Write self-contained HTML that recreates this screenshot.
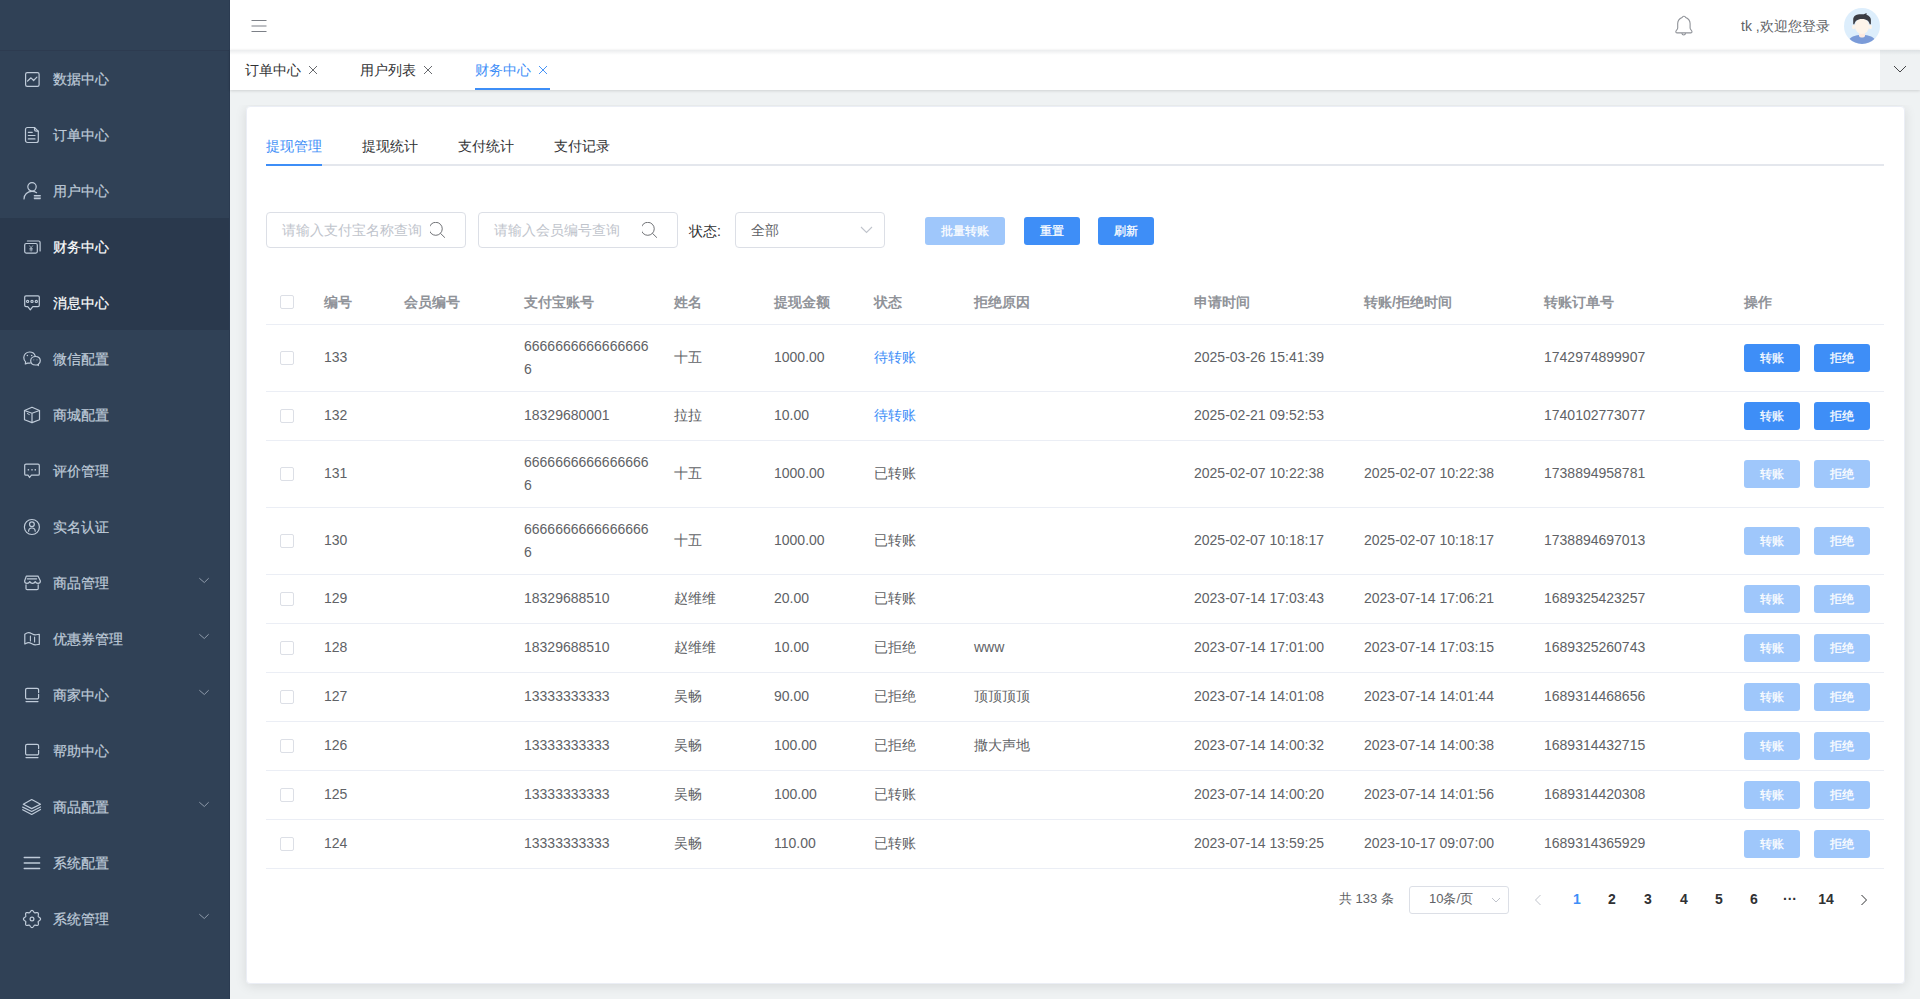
<!DOCTYPE html><html><head><meta charset="utf-8"><style>
*{box-sizing:border-box;margin:0;padding:0}
html,body{width:1920px;height:999px;overflow:hidden;background:#eff2f3;font-family:"Liberation Sans",sans-serif;font-size:14px;color:#606266}
.a{position:absolute}
#side{position:absolute;left:0;top:0;width:230px;height:999px;background:#304156;border-right:1px solid #2b3b51}
#side .logo{position:absolute;left:0;top:0;width:229px;height:51px;border-bottom:1px solid #2d3b50}
.mi{position:absolute;left:0;width:229px;height:56px;color:#bfcbd9;font-size:14px}
.mi.dark{background:#2a394d;color:#fff}
.mi svg.ic{position:absolute;left:20px;top:14px;width:30px;height:30px;fill:none;stroke:#bfcbd9;stroke-width:1.2;stroke-linejoin:round;stroke-linecap:round}
.mi .tx{position:absolute;left:53px;top:1px;line-height:56px;white-space:nowrap;-webkit-text-stroke:.2px currentColor}
.mi svg.ar{position:absolute;left:198px;top:23px;width:12px;height:7px;fill:none;stroke:#8f9bab;stroke-width:1}
#hdr{position:absolute;left:230px;top:0;width:1690px;height:50px;background:#fff}
#tabs{position:absolute;left:230px;top:50px;width:1690px;height:40px;background:#fff;box-shadow:0 1px 3px 0 rgba(0,0,0,.12),0 0 3px 0 rgba(0,0,0,.04)}
#hsh{position:absolute;left:230px;top:50px;width:1690px;height:5px;background:linear-gradient(rgba(0,21,41,.08),rgba(0,21,41,0))}
.tab{position:absolute;top:0;height:40px;line-height:41px;color:#303133;font-size:14px;white-space:nowrap}
.tab.act{color:#3e8ef7}
.tab .x{display:inline-block;margin-left:7px;vertical-align:middle}
.tab.act:after{content:"";position:absolute;left:0;right:0;bottom:0;height:2px;background:#3e8ef7}
#tabr{position:absolute;left:1880px;top:50px;width:40px;height:40px;background:#eff2f3}
#clip{position:absolute;left:231px;top:105px;width:1689px;height:894px;overflow:hidden}
#card{position:absolute;left:246px;top:106px;width:1659px;height:878px;background:#fff;border-radius:4px;border:1px solid #ebeef5}
#csh{position:absolute;left:15px;top:1px;width:1659px;height:878px;border-radius:4px;box-shadow:0 2px 12px 0 rgba(0,0,0,.1)}
.itab{position:absolute;top:0;height:40px;line-height:40px;font-size:14px;color:#303133;white-space:nowrap}
.itab.act{color:#3e8ef7}
.inp{position:absolute;top:212px;height:36px;border:1px solid #dcdfe6;border-radius:4px;background:#fff}
.ph{position:absolute;left:15px;top:0;line-height:34px;color:#c0c4cc;white-space:nowrap}
.btn{position:absolute;height:28px;line-height:28px;border-radius:3px;background:#3e8ef7;color:#fff;font-size:12px;text-align:center;white-space:nowrap;-webkit-text-stroke:.25px #fff}
.btn.dis{background:#9fc7fb}
.th,.td{position:absolute;white-space:nowrap}
.th{color:#909399;font-weight:bold;font-size:14px;line-height:23px}
.td{color:#606266;font-size:14px;line-height:23px}
.hl{position:absolute;left:266px;width:1618px;height:1px;background:#ebeef5}
.cb{position:absolute;left:280px;width:14px;height:14px;border:1px solid #dcdfe6;border-radius:2px;background:#fff}
.pg{position:absolute;top:885px;height:28px;line-height:28px;font-size:14px;color:#303133;font-weight:bold;text-align:center;white-space:nowrap}
</style></head><body>
<div id="side"><div class="logo"></div>
<div class="mi" style="top:50px"><svg class="ic" viewBox="0 0 30 30"><rect x="5.6" y="8.6" width="13.5" height="13.8" rx="1.6"/><path d="M7.6 17l3.4-3.2 2.6 2.7 3.3-3.3"/></svg><span class="tx">数据中心</span></div>
<div class="mi" style="top:106px"><svg class="ic" viewBox="0 0 30 30"><path d="M7.5 7.5h7l3.8 3.8v9.2a2 2 0 0 1-2 2H7.5a2 2 0 0 1-2-2v-11a2 2 0 0 1 2-2z"/><path d="M14.5 7.5v2a1.6 1.6 0 0 0 1.6 1.6h2.2"/><path d="M8.3 12.3h4M8.3 15.5h6.7M8.3 18.9h6.7"/></svg><span class="tx">订单中心</span></div>
<div class="mi" style="top:162px"><svg class="ic" viewBox="0 0 30 30"><circle cx="12" cy="10.8" r="4.2"/><path d="M4 23c0-4.5 3.5-7.6 8-7.6 1.8 0 3.3.4 4.6 1.3"/><path d="M14.3 19.5h6M14.3 21h6M14.3 22.6h6"/></svg><span class="tx">用户中心</span></div>
<div class="mi dark" style="top:218px"><svg class="ic" viewBox="0 0 30 30"><rect x="4.7" y="11.5" width="12.6" height="9.6" rx="1.5"/><path d="M7.4 9h11.3a1.4 1.4 0 0 1 1.4 1.4V19"/><path d="M9.6 13.8l1.5 2 1.5-2M11.1 15.8v3.4M9.8 16.6h2.6M9.8 17.9h2.6" stroke-width=".7"/></svg><span class="tx">财务中心</span></div>
<div class="mi dark" style="top:274px"><svg class="ic" viewBox="0 0 30 30"><path d="M6 7.8h12a1.3 1.3 0 0 1 1.3 1.3v8.2a1.3 1.3 0 0 1-1.3 1.3h-5.2l-2.5 3.2-2.5-3.2H6a1.3 1.3 0 0 1-1.3-1.3V9.1A1.3 1.3 0 0 1 6 7.8z"/><circle cx="7.6" cy="13.4" r="1.1"/><circle cx="12" cy="13.4" r="1.1"/><circle cx="16.3" cy="13.4" r="1.1"/></svg><span class="tx">消息中心</span></div>
<div class="mi" style="top:330px"><svg class="ic" viewBox="0 0 30 30"><path d="M10.3 19c-.9.2-1.8.3-2.7.1L5.3 20l.3-2.1C4.3 16.8 3.8 15.4 3.8 13.6 3.8 10.4 6.4 8 9.6 8c2.7 0 5 1.7 5.6 4"/><circle cx="7.4" cy="11.6" r=".75" fill="#bfcbd9" stroke="none"/><circle cx="11.7" cy="11.6" r=".75" fill="#bfcbd9" stroke="none"/><path d="M18.4 21.5l.1-1.6c1.2-.8 1.8-2 1.8-3.2 0-2.6-2.2-4.2-4.8-4.2s-4.8 1.7-4.8 4.3 2.2 4.2 4.8 4.2c.6 0 1.4-.1 1.9-.3z"/><circle cx="13.8" cy="15.8" r=".6" fill="#8d9aab" stroke="none"/><circle cx="17" cy="15.8" r=".6" fill="#8d9aab" stroke="none"/></svg><span class="tx">微信配置</span></div>
<div class="mi" style="top:386px"><svg class="ic" viewBox="0 0 30 30"><path d="M12 7.2l7.5 3.3v9.3L12 22.6l-7.5-2.8v-9.3z"/><path d="M4.5 10.5L12 13.3l7.5-2.8M12 13.3v9.3"/><path d="M7.3 13.5l2 1" stroke-width="1"/></svg><span class="tx">商城配置</span></div>
<div class="mi" style="top:442px"><svg class="ic" viewBox="0 0 30 30"><path d="M6 8.1h12a1.3 1.3 0 0 1 1.3 1.3v8.5a1.3 1.3 0 0 1-1.3 1.3h-6.6l-1.8 2.3-1.6-2.3H6a1.3 1.3 0 0 1-1.3-1.3V9.4A1.3 1.3 0 0 1 6 8.1z"/><rect x="7.7" y="13.1" width="1.4" height="1.4" fill="#bfcbd9" stroke="none"/><rect x="11.3" y="13.1" width="1.4" height="1.4" fill="#bfcbd9" stroke="none"/><rect x="14.6" y="13.1" width="1.4" height="1.4" fill="#bfcbd9" stroke="none"/></svg><span class="tx">评价管理</span></div>
<div class="mi" style="top:498px"><svg class="ic" viewBox="0 0 30 30"><circle cx="11.9" cy="15" r="7.5"/><circle cx="11.9" cy="12.3" r="2.4"/><path d="M8.6 19.2c0-1.8 1.4-3.2 3.3-3.2s3.3 1.4 3.3 3.2"/></svg><span class="tx">实名认证</span></div>
<div class="mi" style="top:554px"><svg class="ic" viewBox="0 0 30 30"><path d="M6.3 8.1h11.7l2.4 4.9c0 1.3-1 2.3-2.4 2.3-1.4 0-2.5-1-2.8-1.8-.3.8-1.4 1.8-2.7 1.8s-2.4-1-2.7-1.8c-.3.8-1.4 1.8-2.8 1.8-1.4 0-2.4-1-2.4-2.3z"/><path d="M7.3 10.8h9.3" stroke-width="1.3"/><path d="M6 16.8v3.6a1.2 1.2 0 0 0 1.2 1.2h9.8a1.2 1.2 0 0 0 1.2-1.2v-3.6"/></svg><span class="tx">商品管理</span><svg class="ar" viewBox="0 0 12 7"><path d="M1.3 1.2l5 4.3 4.4-4.3"/></svg></div>
<div class="mi" style="top:610px"><svg class="ic" viewBox="0 0 30 30"><path d="M4.8 10.2c1.3-.9 2.6-1.6 3.8-1.6 2.4 0 4.2 2.2 6.6 2.2 1.4 0 2.8-.4 4.1-.5v10c-1.3.2-2.7.6-4.1.6-2.4 0-4.2-2.2-6.6-2.2-1.2 0-2.5.7-3.8 1.3z"/><path d="M10.4 12v5M14.6 13v5" stroke-width="1.1"/></svg><span class="tx">优惠券管理</span><svg class="ar" viewBox="0 0 12 7"><path d="M1.3 1.2l5 4.3 4.4-4.3"/></svg></div>
<div class="mi" style="top:666px"><svg class="ic" viewBox="0 0 30 30"><path d="M18.6 12.5v-2.7a1.5 1.5 0 0 0-1.5-1.5H7.1a1.5 1.5 0 0 0-1.5 1.5v7.6a1.5 1.5 0 0 0 1.5 1.5h10a1.5 1.5 0 0 0 1.5-1.5v-3.1"/><path d="M6 21.6h12"/></svg><span class="tx">商家中心</span><svg class="ar" viewBox="0 0 12 7"><path d="M1.3 1.2l5 4.3 4.4-4.3"/></svg></div>
<div class="mi" style="top:722px"><svg class="ic" viewBox="0 0 30 30"><path d="M18.6 12.5v-2.7a1.5 1.5 0 0 0-1.5-1.5H7.1a1.5 1.5 0 0 0-1.5 1.5v7.6a1.5 1.5 0 0 0 1.5 1.5h10a1.5 1.5 0 0 0 1.5-1.5v-3.1"/><path d="M6 21.6h12"/></svg><span class="tx">帮助中心</span></div>
<div class="mi" style="top:778px"><svg class="ic" viewBox="0 0 30 30"><path d="M11.7 7.5l8.8 4.7-8.8 4.4-8.4-4.4z"/><path d="M2.7 15.1l9 4.4 8.8-4.5M2.7 17.7l9 4.8 8.8-5"/></svg><span class="tx">商品配置</span><svg class="ar" viewBox="0 0 12 7"><path d="M1.3 1.2l5 4.3 4.4-4.3"/></svg></div>
<div class="mi" style="top:834px"><svg class="ic" viewBox="0 0 30 30"><path d="M4.2 9.5h15.5M4.2 15h15.5M4.2 20.5h15.5" stroke-width="1.3"/></svg><span class="tx">系统配置</span></div>
<div class="mi" style="top:890px"><svg class="ic" viewBox="0 0 30 30"><path d="M12.00 6.45 L12.33 6.50 L12.66 6.65 L12.96 6.88 L13.24 7.17 L13.49 7.50 L13.72 7.83 L13.93 8.15 L14.14 8.42 L14.35 8.63 L14.58 8.76 L14.84 8.83 L15.14 8.83 L15.48 8.79 L15.85 8.71 L16.25 8.64 L16.66 8.59 L17.06 8.58 L17.44 8.63 L17.77 8.75 L18.05 8.95 L18.25 9.23 L18.37 9.56 L18.42 9.94 L18.41 10.34 L18.36 10.75 L18.29 11.15 L18.21 11.52 L18.17 11.86 L18.17 12.16 L18.24 12.42 L18.37 12.65 L18.58 12.86 L18.85 13.07 L19.17 13.28 L19.50 13.51 L19.83 13.76 L20.12 14.04 L20.35 14.34 L20.50 14.67 L20.55 15.00 L20.50 15.33 L20.35 15.66 L20.12 15.96 L19.83 16.24 L19.50 16.49 L19.17 16.72 L18.85 16.93 L18.58 17.14 L18.37 17.35 L18.24 17.58 L18.17 17.84 L18.17 18.14 L18.21 18.48 L18.29 18.85 L18.36 19.25 L18.41 19.66 L18.42 20.06 L18.37 20.44 L18.25 20.77 L18.05 21.05 L17.77 21.25 L17.44 21.37 L17.06 21.42 L16.66 21.41 L16.25 21.36 L15.85 21.29 L15.48 21.21 L15.14 21.17 L14.84 21.17 L14.58 21.24 L14.35 21.37 L14.14 21.58 L13.93 21.85 L13.72 22.17 L13.49 22.50 L13.24 22.83 L12.96 23.12 L12.66 23.35 L12.33 23.50 L12.00 23.55 L11.67 23.50 L11.34 23.35 L11.04 23.12 L10.76 22.83 L10.51 22.50 L10.28 22.17 L10.07 21.85 L9.86 21.58 L9.65 21.37 L9.42 21.24 L9.16 21.17 L8.86 21.17 L8.52 21.21 L8.15 21.29 L7.75 21.36 L7.34 21.41 L6.94 21.42 L6.56 21.37 L6.23 21.25 L5.95 21.05 L5.75 20.77 L5.63 20.44 L5.58 20.06 L5.59 19.66 L5.64 19.25 L5.71 18.85 L5.79 18.48 L5.83 18.14 L5.83 17.84 L5.76 17.58 L5.63 17.35 L5.42 17.14 L5.15 16.93 L4.83 16.72 L4.50 16.49 L4.17 16.24 L3.88 15.96 L3.65 15.66 L3.50 15.33 L3.45 15.00 L3.50 14.67 L3.65 14.34 L3.88 14.04 L4.17 13.76 L4.50 13.51 L4.83 13.28 L5.15 13.07 L5.42 12.86 L5.63 12.65 L5.76 12.42 L5.83 12.16 L5.83 11.86 L5.79 11.52 L5.71 11.15 L5.64 10.75 L5.59 10.34 L5.58 9.94 L5.63 9.56 L5.75 9.23 L5.95 8.95 L6.23 8.75 L6.56 8.63 L6.94 8.58 L7.34 8.59 L7.75 8.64 L8.15 8.71 L8.52 8.79 L8.86 8.83 L9.16 8.83 L9.42 8.76 L9.65 8.63 L9.86 8.42 L10.07 8.15 L10.28 7.83 L10.51 7.50 L10.76 7.17 L11.04 6.88 L11.34 6.65 L11.67 6.50z"/><circle cx="12" cy="15" r="1.9"/></svg><span class="tx">系统管理</span><svg class="ar" viewBox="0 0 12 7"><path d="M1.3 1.2l5 4.3 4.4-4.3"/></svg></div>
</div>
<div id="hdr">
<svg class="a" style="left:20px;top:18px" width="18" height="16" viewBox="0 0 18 16"><path d="M1.5 2.5h15M1.5 8h15M1.5 13.5h15" stroke="#7c8087" stroke-width="1.2" fill="none"/></svg>
<svg class="a" style="left:1444px;top:14px" width="22" height="24" viewBox="0 0 22 24"><path d="M9.7 2.3c-.8 0-1.3.5-1.6 1.2C5.7 4.5 3.8 6.3 3.7 9.5v4.5c0 .8-.4 1.3-.9 1.8-.6.6-1 1.2-1 1.9 0 .7.4 1.2 1.2 1.2h13.8c.8 0 1.2-.5 1.2-1.2 0-.7-.4-1.3-1-1.9-.5-.5-.9-1-.9-1.8V9.5c-.1-3.2-2-5-4.4-6-.3-.7-.8-1.2-1.6-1.2z" fill="none" stroke="#909399" stroke-width="1.1"/><path d="M7.8 19.2c.2 1.1 1 1.8 1.9 1.8s1.7-.7 1.9-1.8" fill="none" stroke="#909399" stroke-width="1.1"/></svg>
<div class="a" style="left:1511px;top:1px;line-height:50px;font-size:14px;color:#606266;white-space:nowrap">tk ,欢迎您登录</div>
<svg class="a" style="left:1614px;top:8px" width="36" height="36" viewBox="0 0 36 36"><defs><clipPath id="ac"><circle cx="18" cy="18" r="17.9"/></clipPath></defs><circle cx="18" cy="18" r="18" fill="#ddeefc"/><g clip-path="url(#ac)"><ellipse cx="18" cy="33" rx="13" ry="6.3" fill="#7b9bd8"/><rect x="15" y="22.5" width="6" height="7" rx="2" fill="#fde9df"/><ellipse cx="9.6" cy="18.9" rx="1.6" ry="2.2" fill="#fdf4ea"/><ellipse cx="26.4" cy="18.9" rx="1.6" ry="2.2" fill="#fdf4ea"/><ellipse cx="18" cy="18.3" rx="7.1" ry="7.7" fill="#fdf4ea"/><path d="M9.2 16.3V11.6c0-3.2 2.6-5.3 6-5.4h4.6l2.8-1.2-.1 1.7c2.4.9 4.4 2.6 4.4 5v4.6h-1.2c-.6-3-2.7-5.3-7.7-5.3s-7 2.3-7.6 5.3z" fill="#3b3d44"/></g></svg>
</div>
<div id="tabs">
<div class="tab" style="left:15px;width:75px">订单中心<svg class="x" width="10" height="10" viewBox="0 0 10 10" style="margin-top:-2px"><path d="M1 1l8 8M9 1L1 9" stroke="#606266" stroke-width="0.95"/></svg></div>
<div class="tab" style="left:130px;width:75px">用户列表<svg class="x" width="10" height="10" viewBox="0 0 10 10" style="margin-top:-2px"><path d="M1 1l8 8M9 1L1 9" stroke="#606266" stroke-width="0.95"/></svg></div>
<div class="tab act" style="left:245px;width:75px">财务中心<svg class="x" width="10" height="10" viewBox="0 0 10 10" style="margin-top:-2px"><path d="M1 1l8 8M9 1L1 9" stroke="#3e8ef7" stroke-width="0.95"/></svg></div>
</div>
<div id="tabr"><svg class="a" style="left:13px;top:15px" width="14" height="8" viewBox="0 0 14 8"><path d="M1 1l6 6 6-6" stroke="#303133" stroke-width=".9" fill="none"/></svg></div>
<div id="hsh"></div>
<div id="clip"><div id="csh"></div></div>
<div id="card">
<div class="a" style="left:19px;top:57px;width:1618px;height:2px;background:#e4e7ed"></div>
<div class="itab act" style="left:19px;top:19px">提现管理</div>
<div class="itab" style="left:115px;top:19px">提现统计</div>
<div class="itab" style="left:211px;top:19px">支付统计</div>
<div class="itab" style="left:307px;top:19px">支付记录</div>
<div class="a" style="left:19px;top:57px;width:56px;height:2px;background:#3e8ef7"></div>
</div>
<div class="inp" style="left:266px;width:200px"><span class="ph">请输入支付宝名称查询</span><svg class="a" style="right:18px;top:9px" width="17" height="17" viewBox="0 0 17 17"><circle cx="5.75" cy="6.8" r="6.5" fill="none" stroke="#606266" stroke-width=".9"/><path d="M10.4 11.3l4.5 4.4" stroke="#606266" stroke-width=".9"/></svg></div>
<div class="inp" style="left:478px;width:200px"><span class="ph">请输入会员编号查询</span><svg class="a" style="right:18px;top:9px" width="17" height="17" viewBox="0 0 17 17"><circle cx="5.75" cy="6.8" r="6.5" fill="none" stroke="#606266" stroke-width=".9"/><path d="M10.4 11.3l4.5 4.4" stroke="#606266" stroke-width=".9"/></svg></div>
<div class="a" style="left:689px;top:213px;line-height:36px;color:#303133;white-space:nowrap">状态:</div>
<div class="inp" style="left:735px;width:150px"><span class="ph" style="color:#606266">全部</span><svg class="a" style="right:11px;top:13px" width="13" height="8" viewBox="0 0 13 8"><path d="M1 1l5.5 5.5L12 1" stroke="#c0c4cc" stroke-width="1.1" fill="none"/></svg></div>
<div class="btn dis" style="left:925px;top:217px;width:80px">批量转账</div>
<div class="btn" style="left:1024px;top:217px;width:56px">重置</div>
<div class="btn" style="left:1098px;top:217px;width:56px">刷新</div>
<div class="th" style="left:324px;top:291px">编号</div>
<div class="th" style="left:404px;top:291px">会员编号</div>
<div class="th" style="left:524px;top:291px">支付宝账号</div>
<div class="th" style="left:674px;top:291px">姓名</div>
<div class="th" style="left:774px;top:291px">提现金额</div>
<div class="th" style="left:874px;top:291px">状态</div>
<div class="th" style="left:974px;top:291px">拒绝原因</div>
<div class="th" style="left:1194px;top:291px">申请时间</div>
<div class="th" style="left:1364px;top:291px">转账/拒绝时间</div>
<div class="th" style="left:1544px;top:291px">转账订单号</div>
<div class="th" style="left:1744px;top:291px">操作</div>
<div class="cb" style="top:295px"></div>
<div class="hl" style="top:324px"></div>
<div class="cb" style="top:351px"></div>
<div class="td" style="left:324px;top:346px">133</div>
<div class="td" style="left:524px;top:335px">6666666666666666<br>6</div>
<div class="td" style="left:674px;top:346px">十五</div>
<div class="td" style="left:774px;top:346px">1000.00</div>
<div class="td" style="left:874px;top:346px;color:#3e8ef7">待转账</div>
<div class="td" style="left:1194px;top:346px">2025-03-26 15:41:39</div>
<div class="td" style="left:1544px;top:346px">1742974899907</div>
<div class="btn" style="left:1744px;top:344px;width:56px">转账</div>
<div class="btn" style="left:1814px;top:344px;width:56px">拒绝</div>
<div class="hl" style="top:391px"></div>
<div class="cb" style="top:409px"></div>
<div class="td" style="left:324px;top:404px">132</div>
<div class="td" style="left:524px;top:404px">18329680001</div>
<div class="td" style="left:674px;top:404px">拉拉</div>
<div class="td" style="left:774px;top:404px">10.00</div>
<div class="td" style="left:874px;top:404px;color:#3e8ef7">待转账</div>
<div class="td" style="left:1194px;top:404px">2025-02-21 09:52:53</div>
<div class="td" style="left:1544px;top:404px">1740102773077</div>
<div class="btn" style="left:1744px;top:402px;width:56px">转账</div>
<div class="btn" style="left:1814px;top:402px;width:56px">拒绝</div>
<div class="hl" style="top:440px"></div>
<div class="cb" style="top:467px"></div>
<div class="td" style="left:324px;top:462px">131</div>
<div class="td" style="left:524px;top:451px">6666666666666666<br>6</div>
<div class="td" style="left:674px;top:462px">十五</div>
<div class="td" style="left:774px;top:462px">1000.00</div>
<div class="td" style="left:874px;top:462px">已转账</div>
<div class="td" style="left:1194px;top:462px">2025-02-07 10:22:38</div>
<div class="td" style="left:1364px;top:462px">2025-02-07 10:22:38</div>
<div class="td" style="left:1544px;top:462px">1738894958781</div>
<div class="btn dis" style="left:1744px;top:460px;width:56px">转账</div>
<div class="btn dis" style="left:1814px;top:460px;width:56px">拒绝</div>
<div class="hl" style="top:507px"></div>
<div class="cb" style="top:534px"></div>
<div class="td" style="left:324px;top:529px">130</div>
<div class="td" style="left:524px;top:518px">6666666666666666<br>6</div>
<div class="td" style="left:674px;top:529px">十五</div>
<div class="td" style="left:774px;top:529px">1000.00</div>
<div class="td" style="left:874px;top:529px">已转账</div>
<div class="td" style="left:1194px;top:529px">2025-02-07 10:18:17</div>
<div class="td" style="left:1364px;top:529px">2025-02-07 10:18:17</div>
<div class="td" style="left:1544px;top:529px">1738894697013</div>
<div class="btn dis" style="left:1744px;top:527px;width:56px">转账</div>
<div class="btn dis" style="left:1814px;top:527px;width:56px">拒绝</div>
<div class="hl" style="top:574px"></div>
<div class="cb" style="top:592px"></div>
<div class="td" style="left:324px;top:587px">129</div>
<div class="td" style="left:524px;top:587px">18329688510</div>
<div class="td" style="left:674px;top:587px">赵维维</div>
<div class="td" style="left:774px;top:587px">20.00</div>
<div class="td" style="left:874px;top:587px">已转账</div>
<div class="td" style="left:1194px;top:587px">2023-07-14 17:03:43</div>
<div class="td" style="left:1364px;top:587px">2023-07-14 17:06:21</div>
<div class="td" style="left:1544px;top:587px">1689325423257</div>
<div class="btn dis" style="left:1744px;top:585px;width:56px">转账</div>
<div class="btn dis" style="left:1814px;top:585px;width:56px">拒绝</div>
<div class="hl" style="top:623px"></div>
<div class="cb" style="top:641px"></div>
<div class="td" style="left:324px;top:636px">128</div>
<div class="td" style="left:524px;top:636px">18329688510</div>
<div class="td" style="left:674px;top:636px">赵维维</div>
<div class="td" style="left:774px;top:636px">10.00</div>
<div class="td" style="left:874px;top:636px">已拒绝</div>
<div class="td" style="left:974px;top:636px">www</div>
<div class="td" style="left:1194px;top:636px">2023-07-14 17:01:00</div>
<div class="td" style="left:1364px;top:636px">2023-07-14 17:03:15</div>
<div class="td" style="left:1544px;top:636px">1689325260743</div>
<div class="btn dis" style="left:1744px;top:634px;width:56px">转账</div>
<div class="btn dis" style="left:1814px;top:634px;width:56px">拒绝</div>
<div class="hl" style="top:672px"></div>
<div class="cb" style="top:690px"></div>
<div class="td" style="left:324px;top:685px">127</div>
<div class="td" style="left:524px;top:685px">13333333333</div>
<div class="td" style="left:674px;top:685px">吴畅</div>
<div class="td" style="left:774px;top:685px">90.00</div>
<div class="td" style="left:874px;top:685px">已拒绝</div>
<div class="td" style="left:974px;top:685px">顶顶顶顶</div>
<div class="td" style="left:1194px;top:685px">2023-07-14 14:01:08</div>
<div class="td" style="left:1364px;top:685px">2023-07-14 14:01:44</div>
<div class="td" style="left:1544px;top:685px">1689314468656</div>
<div class="btn dis" style="left:1744px;top:683px;width:56px">转账</div>
<div class="btn dis" style="left:1814px;top:683px;width:56px">拒绝</div>
<div class="hl" style="top:721px"></div>
<div class="cb" style="top:739px"></div>
<div class="td" style="left:324px;top:734px">126</div>
<div class="td" style="left:524px;top:734px">13333333333</div>
<div class="td" style="left:674px;top:734px">吴畅</div>
<div class="td" style="left:774px;top:734px">100.00</div>
<div class="td" style="left:874px;top:734px">已拒绝</div>
<div class="td" style="left:974px;top:734px">撒大声地</div>
<div class="td" style="left:1194px;top:734px">2023-07-14 14:00:32</div>
<div class="td" style="left:1364px;top:734px">2023-07-14 14:00:38</div>
<div class="td" style="left:1544px;top:734px">1689314432715</div>
<div class="btn dis" style="left:1744px;top:732px;width:56px">转账</div>
<div class="btn dis" style="left:1814px;top:732px;width:56px">拒绝</div>
<div class="hl" style="top:770px"></div>
<div class="cb" style="top:788px"></div>
<div class="td" style="left:324px;top:783px">125</div>
<div class="td" style="left:524px;top:783px">13333333333</div>
<div class="td" style="left:674px;top:783px">吴畅</div>
<div class="td" style="left:774px;top:783px">100.00</div>
<div class="td" style="left:874px;top:783px">已转账</div>
<div class="td" style="left:1194px;top:783px">2023-07-14 14:00:20</div>
<div class="td" style="left:1364px;top:783px">2023-07-14 14:01:56</div>
<div class="td" style="left:1544px;top:783px">1689314420308</div>
<div class="btn dis" style="left:1744px;top:781px;width:56px">转账</div>
<div class="btn dis" style="left:1814px;top:781px;width:56px">拒绝</div>
<div class="hl" style="top:819px"></div>
<div class="cb" style="top:837px"></div>
<div class="td" style="left:324px;top:832px">124</div>
<div class="td" style="left:524px;top:832px">13333333333</div>
<div class="td" style="left:674px;top:832px">吴畅</div>
<div class="td" style="left:774px;top:832px">110.00</div>
<div class="td" style="left:874px;top:832px">已转账</div>
<div class="td" style="left:1194px;top:832px">2023-07-14 13:59:25</div>
<div class="td" style="left:1364px;top:832px">2023-10-17 09:07:00</div>
<div class="td" style="left:1544px;top:832px">1689314365929</div>
<div class="btn dis" style="left:1744px;top:830px;width:56px">转账</div>
<div class="btn dis" style="left:1814px;top:830px;width:56px">拒绝</div>
<div class="hl" style="top:868px"></div>
<div class="a" style="left:1339px;top:885px;line-height:28px;font-size:13px;color:#606266;white-space:nowrap">共 133 条</div>
<div class="a" style="left:1409px;top:886px;width:100px;height:28px;border:1px solid #dcdfe6;border-radius:3px;background:#fff"><span class="a" style="left:19px;top:-1px;line-height:26px;font-size:13px;color:#606266;white-space:nowrap">10条/页</span><svg class="a" style="right:7px;top:10px" width="10" height="6" viewBox="0 0 10 6"><path d="M1 1l4 4 4-4" stroke="#c0c4cc" stroke-width="1" fill="none"/></svg></div>
<svg class="a" style="left:1534px;top:894px" width="8" height="12" viewBox="0 0 8 12"><path d="M6.5 1L1.5 6l5 5" stroke="#c0c4cc" stroke-width="1" fill="none"/></svg>
<div class="pg" style="left:1577px;width:36px;margin-left:-18px;color:#3e8ef7">1</div>
<div class="pg" style="left:1612px;width:36px;margin-left:-18px">2</div>
<div class="pg" style="left:1648px;width:36px;margin-left:-18px">3</div>
<div class="pg" style="left:1684px;width:36px;margin-left:-18px">4</div>
<div class="pg" style="left:1719px;width:36px;margin-left:-18px">5</div>
<div class="pg" style="left:1754px;width:36px;margin-left:-18px">6</div>
<div class="pg" style="left:1790px;width:36px;margin-left:-18px">···</div>
<div class="pg" style="left:1826px;width:36px;margin-left:-18px">14</div>
<svg class="a" style="left:1860px;top:894px" width="8" height="12" viewBox="0 0 8 12"><path d="M1.5 1l5 5-5 5" stroke="#303133" stroke-width="1" fill="none"/></svg>
</body></html>
